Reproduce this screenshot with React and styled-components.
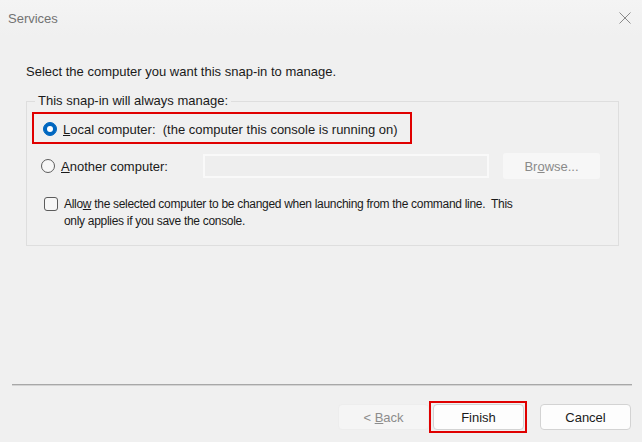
import styled, { createGlobalStyle } from 'styled-components';

const GlobalStyle = createGlobalStyle`
  html, body {
    margin: 0;
    padding: 0;
    background: #f0f0f0;
  }
  body {
    font-family: "Liberation Sans", Arial, sans-serif;
    font-size: 13px;
    color: #1a1a1a;
  }
`;

const Window = styled.div`
  width: 642px;
  height: 442px;
  display: flex;
  flex-direction: column;
  background: #f0f0f0;
  overflow: hidden;
`;

const TitleBar = styled.div`
  height: 36px;
  flex: none;
  display: flex;
  align-items: center;
  justify-content: space-between;
  padding: 0 11px 0 8px;
  background: linear-gradient(#f4f4f4, #f0f0f0);
  color: #727272;
  font-size: 13px;
`;

const CloseIcon = () => (
  <svg width="12" height="12" viewBox="0 0 12 12">
    <path d="M0.5 0.5 L11.5 11.5 M11.5 0.5 L0.5 11.5" stroke="#8a8a8a" strokeWidth="1" fill="none" />
  </svg>
);

const Body = styled.div`
  flex: 1;
  padding: 28px 23px 0 26px;
`;

const Intro = styled.div`
  line-height: 16px;
`;

const Group = styled.fieldset`
  margin: 13px 0 0;
  padding: 0;
  height: 153px;
  box-sizing: border-box;
  border: 1px solid #dedede;
  min-width: 0;
`;

const Legend = styled.legend`
  margin-left: 8px;
  padding: 0 3px;
  line-height: 16px;
`;

const Highlight = styled.div`
  margin: 3px 0 0 5px;
  width: 380px;
  height: 32px;
  box-sizing: border-box;
  border: 2px solid #e00000;
  display: flex;
  align-items: center;
  padding: 2px 0 0 9px;
`;

const RadioRow = styled.div`
  display: flex;
  align-items: center;
  height: 24px;
  margin: 10px 0 0 14px;
`;

const Label = styled.span`
  display: inline-flex;
  align-items: center;
  color: #1a1a1a;
  white-space: pre;
  margin-left: 6px;
  width: ${(p) => (p.$width ? `${p.$width}px` : 'auto')};
`;

const Radio = styled.span`
  width: 14px;
  height: 14px;
  box-sizing: border-box;
  border-radius: 50%;
  flex: none;
  display: inline-flex;
  align-items: center;
  justify-content: center;
  background: ${(p) => (p.checked ? '#0067c0' : '#f7f7f7')};
  border: 1px solid ${(p) => (p.checked ? '#0067c0' : '#5c5c5c')};
  &::after {
    content: '';
    width: 6px;
    height: 6px;
    border-radius: 50%;
    background: ${(p) => (p.checked ? '#ffffff' : 'transparent')};
  }
`;

const TextBox = styled.div`
  width: 286px;
  height: 24px;
  box-sizing: border-box;
  border: 2px solid #f9f9f9;
  background: #eeeeee;
`;

const Browse = styled.div`
  margin-left: 14px;
  width: 97px;
  height: 26px;
  box-sizing: border-box;
  border-radius: 3px;
  background: #f7f7f7;
  color: #8a8a8a;
  display: flex;
  align-items: center;
  justify-content: center;
`;

const CheckRow = styled.div`
  display: flex;
  align-items: flex-start;
  margin: 18px 0 0 17px;
`;

const CheckBox = styled.span`
  width: 14px;
  height: 14px;
  box-sizing: border-box;
  flex: none;
  margin-top: 1px;
  border: 1px solid #5c5c5c;
  border-radius: 3px;
  background: #f7f7f7;
`;

const CheckText = styled.div`
  margin-left: 6px;
  width: 470px;
  font-size: 12px;
  letter-spacing: -0.3px;
  line-height: 17px;
  white-space: pre-wrap;
`;

const Footer = styled.div`
  flex: none;
  padding-bottom: 9px;
`;

const Separator = styled.div`
  margin: 0 10px 0 12px;
  border-top: 1px solid #a8a8a8;
  border-bottom: 1px solid #d4d4d4;
`;

const ButtonRow = styled.div`
  display: flex;
  justify-content: flex-end;
  align-items: center;
  padding: 15px 11px 0 0;
`;

const Button = styled.div`
  width: 91px;
  height: 26px;
  box-sizing: border-box;
  border-radius: 4px;
  display: flex;
  align-items: center;
  justify-content: center;
  background: ${(p) => (p.disabled ? '#f5f5f5' : '#fdfdfd')};
  border: 1px solid ${(p) => (p.disabled ? '#ededed' : '#d3d3d3')};
  color: ${(p) => (p.disabled ? '#8c8c8c' : '#1a1a1a')};
  margin-left: ${(p) => p.gap || 0}px;
`;

const ButtonFrame = styled.div`
  border: 2px solid #e00000;
  padding: 1px 1px 1px 2px;
  display: flex;
  margin-left: ${(p) => p.gap || 0}px;
`;

export default function App() {
  return (
    <Window>
      <GlobalStyle />
      <TitleBar>
        <span>Services</span>
        <CloseIcon />
      </TitleBar>
      <Body>
        <Intro>Select the computer you want this snap-in to manage.</Intro>
        <Group>
          <Legend>This snap-in will always manage:</Legend>
          <Highlight>
            <Radio checked />
            <Label>
              <span><u>L</u>ocal computer:  (the computer this console is running on)</span>
            </Label>
          </Highlight>
          <RadioRow>
            <Radio />
            <Label $width={142}>
              <span><u>A</u>nother computer:</span>
            </Label>
            <TextBox />
            <Browse>
              <span>Br<u>o</u>wse...</span>
            </Browse>
          </RadioRow>
          <CheckRow>
            <CheckBox />
            <CheckText>
              Allo<u>w</u> the selected computer to be changed when launching from the command line.  This only applies if you save the console.
            </CheckText>
          </CheckRow>
        </Group>
      </Body>
      <Footer>
        <Separator />
        <ButtonRow>
          <Button disabled>
            <span>&lt; <u>B</u>ack</span>
          </Button>
          <ButtonFrame>
            <Button>Finish</Button>
          </ButtonFrame>
          <Button gap={13}>Cancel</Button>
        </ButtonRow>
      </Footer>
    </Window>
  );
}
